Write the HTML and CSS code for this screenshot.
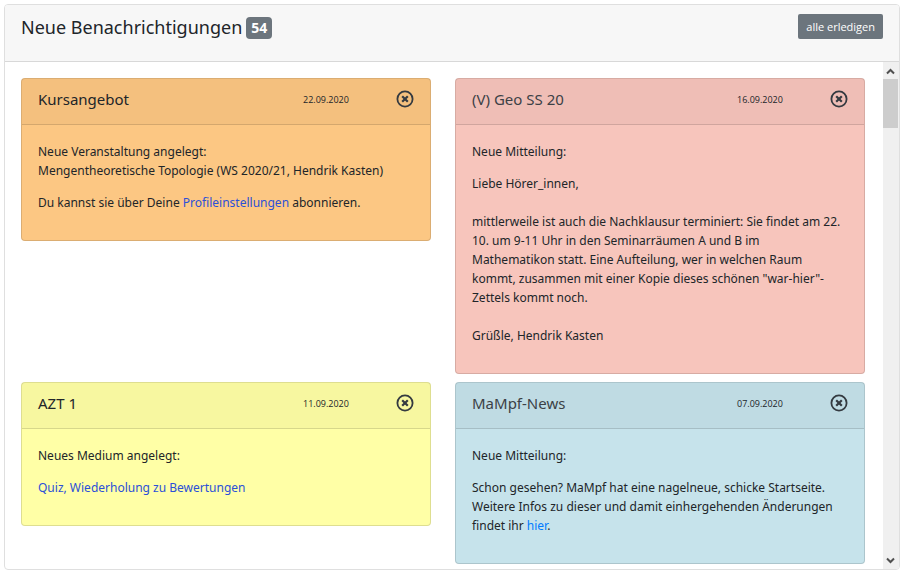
FILE: index.html
```html
<!DOCTYPE html>
<html lang="de">
<head>
<meta charset="utf-8">
<title>Neue Benachrichtigungen</title>
<link rel="stylesheet" href="styles.css">
</head>
<body>
<svg class="sprite" aria-hidden="true">
  <symbol id="dismiss" viewBox="0 0 18 18">
    <circle cx="9" cy="9" r="7.6" fill="none" stroke="currentColor" stroke-width="1.8"/>
    <path d="M6.2 6.2l5.6 5.6M11.8 6.2l-5.6 5.6" fill="none" stroke="currentColor" stroke-width="2.2"/>
  </symbol>
</svg>
<main class="panel">
  <header class="panel-header">
    <h1 class="panel-title">Neue Benachrichtigungen <span class="badge">54</span></h1>
    <button class="button" type="button">alle erledigen</button>
  </header>
  <div class="panel-body">
    <div class="notifications">
      <article class="card orange">
        <header class="card-header">
          <h2 class="card-title">Kursangebot</h2>
          <time class="date" datetime="2020-09-22">22.09.2020</time>
          <button class="dismiss" type="button" aria-label="Erledigt"><svg class="icon"><use href="#dismiss"/></svg></button>
        </header>
        <div class="card-body">
          <p>Neue Veranstaltung angelegt:<br>Mengentheoretische Topologie (WS 2020/21, Hendrik Kasten)</p>
          <p>Du kannst sie über Deine <a href="#">Profileinstellungen</a> abonnieren.</p>
        </div>
      </article>
      <article class="card red">
        <header class="card-header">
          <h2 class="card-title muted">(V) Geo SS 20</h2>
          <time class="date" datetime="2020-09-16">16.09.2020</time>
          <button class="dismiss" type="button" aria-label="Erledigt"><svg class="icon"><use href="#dismiss"/></svg></button>
        </header>
        <div class="card-body">
          <p>Neue Mitteilung:</p>
          <p>Liebe Hörer_innen,<br><br>mittlerweile ist auch die Nachklausur terminiert: Sie findet am 22.<br>10. um 9-11 Uhr in den Seminarräumen A und B im<br>Mathematikon statt. Eine Aufteilung, wer in welchen Raum<br>kommt, zusammen mit einer Kopie dieses schönen "war-hier"-<br>Zettels kommt noch.<br><br>Grüßle, Hendrik Kasten</p>
        </div>
      </article>
      <article class="card yellow">
        <header class="card-header">
          <h2 class="card-title">AZT 1</h2>
          <time class="date" datetime="2020-09-11">11.09.2020</time>
          <button class="dismiss" type="button" aria-label="Erledigt"><svg class="icon"><use href="#dismiss"/></svg></button>
        </header>
        <div class="card-body">
          <p>Neues Medium angelegt:</p>
          <p><a href="#">Quiz, Wiederholung zu Bewertungen</a></p>
        </div>
      </article>
      <article class="card blue">
        <header class="card-header">
          <h2 class="card-title muted">MaMpf-News</h2>
          <time class="date" datetime="2020-09-07">07.09.2020</time>
          <button class="dismiss" type="button" aria-label="Erledigt"><svg class="icon"><use href="#dismiss"/></svg></button>
        </header>
        <div class="card-body">
          <p>Neue Mitteilung:</p>
          <p>Schon gesehen? MaMpf hat eine nagelneue, schicke Startseite.<br>Weitere Infos zu dieser und damit einhergehenden Änderungen<br>findet ihr <a class="bright" href="#">hier</a>.</p>
        </div>
      </article>
    </div>
    <div class="scrollbar" aria-hidden="true">
      <svg class="arrow" viewBox="0 0 15 17"><path d="M4 11.5l3.5-3.5 3.5 3.5" fill="none" stroke="currentColor" stroke-width="2"/></svg>
      <div class="track"><div class="thumb"></div></div>
      <svg class="arrow" viewBox="0 0 15 17"><path d="M4 6.5l3.5 3.5 3.5-3.5" fill="none" stroke="currentColor" stroke-width="2"/></svg>
    </div>
  </div>
</main>
</body>
</html>
```

FILE: styles.css
```css
* { box-sizing: border-box; }

body {
  margin: 0;
  padding: 4px 5px 5px 4px;
  height: 100vh;
  background: #fff;
  color: #212529;
  font: 12px/19px "Noto Sans", "Open Sans", sans-serif;
}

h1, h2, p { margin: 0; font-weight: 400; }
a { color: #2b50d8; text-decoration: none; }
a.bright { color: #007bff; }
button { font-family: inherit; cursor: pointer; }
.sprite { display: none; }

.panel {
  display: flex;
  flex-direction: column;
  height: 100%;
  border: 1px solid #dfdfdf;
  border-radius: 4px;
  overflow: hidden;
}

.panel-header {
  display: flex;
  justify-content: space-between;
  align-items: flex-start;
  padding: 9px 16px 20px;
  background: #f7f7f7;
  border-bottom: 1px solid #d8d8d8;
}

.panel-title {
  display: flex;
  align-items: center;
  gap: 4px;
  font-size: 18px;
  line-height: 27px;
}

.badge {
  padding: 0 5px;
  border-radius: 4px;
  background: #6c757d;
  color: #fff;
  font-size: 14px;
  font-weight: 700;
  line-height: 22px;
}

.button {
  padding: 0 8px;
  border: 0;
  border-radius: 2px;
  background: #6c757d;
  color: #fff;
  font-family: "Open Sans", sans-serif;
  font-size: 11px;
  line-height: 25px;
}

.panel-body { display: flex; flex: 1; min-height: 0; }

.notifications {
  flex: 1;
  display: grid;
  grid-template-columns: 1fr 1fr;
  align-content: start;
  align-items: start;
  gap: 8px 24px;
  padding: 16px 18px 0 16px;
  overflow-y: auto;
  scrollbar-width: none;
}

.card {
  min-width: 0;
  border: 1px solid rgba(0, 0, 0, 0.13);
  border-radius: 4px;
}

.orange { background: #fcc783; }
.red { background: #f7c5bc; }
.yellow { background: #ffffa6; }
.blue { background: #c6e3eb; }

.card-header {
  display: grid;
  grid-template-columns: 1fr 93px 18px;
  align-items: center;
  padding: 8px 16px 13px;
  background: rgba(0, 0, 0, 0.03);
  border-bottom: 1px solid rgba(0, 0, 0, 0.13);
}

.card-title { font-size: 15px; line-height: 24px; }
.muted { color: #3c4146; }
.date { font-family: "Open Sans", sans-serif; font-size: 9px; }

.dismiss {
  display: block;
  padding: 0;
  border: 0;
  background: none;
  color: #343a40;
}

.icon { display: block; width: 18px; height: 18px; }

.card-body { padding: 17px 16px 15px; white-space: nowrap; }
.card-body p { margin-bottom: 13px; }

.scrollbar {
  display: flex;
  flex-direction: column;
  width: 16px;
  padding-right: 1px;
  background: #f0f0f0;
}

.arrow { width: 15px; height: 17px; color: #505050; }
.track { flex: 1; }
.thumb { height: 49px; background: #cdcdcd; }
```
